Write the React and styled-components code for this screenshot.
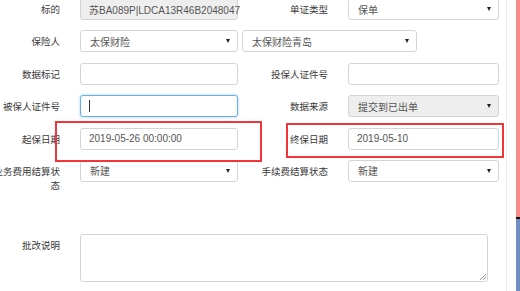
import styled, { createGlobalStyle } from 'styled-components'

const GlobalStyle = createGlobalStyle`
  html, body {
    margin: 0;
    padding: 0;
    background: #fff;
    overflow: hidden;
  }
  body {
    font-family: "Liberation Sans", "Noto Sans CJK SC", sans-serif;
    font-size: 10px;
    color: #333;
  }
`

export default function App() {
  return (
    <Page>
      <GlobalStyle />
      <Main>
        <Form>
          <Row>
            <Label>标的</Label>
            <TextBox readonly>苏BA089P|LDCA13R46B2048047</TextBox>
            <Gap />
            <Label>单证类型</Label>
            <SelectBox wide>
              <span>保单</span>
              <Caret />
            </SelectBox>
          </Row>
          <Row>
            <Label>保险人</Label>
            <SelectBox>
              <span>太保财险</span>
              <Caret />
            </SelectBox>
            <SelectBox second>
              <span>太保财险青岛</span>
              <Caret />
            </SelectBox>
          </Row>
          <Row>
            <Label>数据标记</Label>
            <TextBox />
            <Gap />
            <Label>投保人证件号</Label>
            <TextBox wide />
          </Row>
          <Row>
            <Label>被保人证件号</Label>
            <TextBox focused>
              <Cursor />
            </TextBox>
            <Gap />
            <Label>数据来源</Label>
            <SelectBox wide disabled>
              <span>提交到已出单</span>
              <Caret />
            </SelectBox>
          </Row>
          <Row>
            <Label>起保日期</Label>
            <TextBox>2019-05-26 00:00:00</TextBox>
            <Gap />
            <Label>终保日期</Label>
            <TextBox wide>2019-05-10</TextBox>
          </Row>
          <Row>
            <Label>业务费用结算状态</Label>
            <SelectBox>
              <span>新建</span>
              <Caret />
            </SelectBox>
            <Gap />
            <Label>手续费结算状态</Label>
            <SelectBox wide>
              <span>新建</span>
              <Caret />
            </SelectBox>
          </Row>
          <NoteRow>
            <Label>批改说明</Label>
            <TextArea />
          </NoteRow>
        </Form>
        <Mark style={{ left: 55, top: 121, width: 207, height: 41 }} />
        <Mark style={{ left: 286, top: 123, width: 218, height: 35 }} />
      </Main>
      <Divider />
      <Strip />
    </Page>
  )
}

const Page = styled.div`
  display: flex;
  width: 520px;
  height: 291px;
  overflow: hidden;
`

const Main = styled.div`
  position: relative;
  width: 506px;
  height: 100%;
`

const Divider = styled.div`
  width: 1px;
  height: 100%;
  background: #e9edf3;
  margin-right: 9px;
`

const Strip = styled.div`
  width: 4px;
  height: 100%;
  background: linear-gradient(
    to bottom,
    #f88a8a 0,
    #f88a8a 217px,
    #111 217px,
    #111 219px,
    #6f8fc3 219px
  );
`

const Form = styled.div`
  display: flex;
  flex-direction: column;
  gap: 10.4px;
  margin: -2px 0 0 -10px;
`

const Row = styled.div`
  display: flex;
  align-items: flex-start;
  height: 22px;
`

const NoteRow = styled.div`
  display: flex;
  align-items: flex-start;
  margin-top: 41.6px;
`

const Label = styled.div`
  width: 70px;
  flex: none;
  margin-right: 20px;
  padding-top: 5px;
  text-align: right;
  font-size: 9.5px;
  line-height: 14px;
  color: #3a3a3a;
`

const Gap = styled.div`
  width: 20px;
  flex: none;
`

const TextBox = styled.div`
  box-sizing: border-box;
  width: ${p => (p.wide ? '151px' : '158px')};
  height: 22px;
  flex: none;
  display: flex;
  align-items: center;
  padding: 0 8px;
  border: 1px solid ${p => (p.focused ? '#66afe9' : '#d4d4d4')};
  border-radius: 3px;
  background: ${p => (p.readonly ? '#eeeeee' : '#fff')};
  box-shadow: ${p =>
    p.focused ? '0 0 3px rgba(102, 175, 233, 0.6)' : 'none'};
  color: #555;
  white-space: nowrap;
`

const Cursor = styled.span`
  width: 1px;
  height: 12px;
  background: #333;
`

const SelectBox = styled.div`
  box-sizing: border-box;
  width: ${p => (p.second ? '175px' : p.wide ? '151px' : '158px')};
  margin-left: ${p => (p.second ? '4px' : '0')};
  height: 22px;
  flex: none;
  display: flex;
  align-items: center;
  justify-content: space-between;
  padding: 0 7px 0 9px;
  border: 1px solid #d4d4d4;
  border-radius: 3px;
  background: ${p => (p.disabled ? '#eeeeee' : '#fff')};
  color: #555;
`

const Caret = styled.span`
  width: 0;
  height: 0;
  border-left: 2.5px solid transparent;
  border-right: 2.5px solid transparent;
  border-top: 4px solid #222;
`

const TextArea = styled.div`
  box-sizing: border-box;
  width: 408px;
  height: 48px;
  border: 1px solid #d4d4d4;
  border-radius: 3px;
  position: relative;

  &::after {
    content: '';
    position: absolute;
    right: 1px;
    bottom: 1px;
    width: 6px;
    height: 6px;
    background: linear-gradient(
      135deg,
      transparent 45%,
      #999 45%,
      #999 55%,
      transparent 55%,
      transparent 70%,
      #999 70%,
      #999 80%,
      transparent 80%
    );
  }
`

const Mark = styled.div`
  position: absolute;
  box-sizing: border-box;
  border: 2px solid #f0363a;
  pointer-events: none;
`
